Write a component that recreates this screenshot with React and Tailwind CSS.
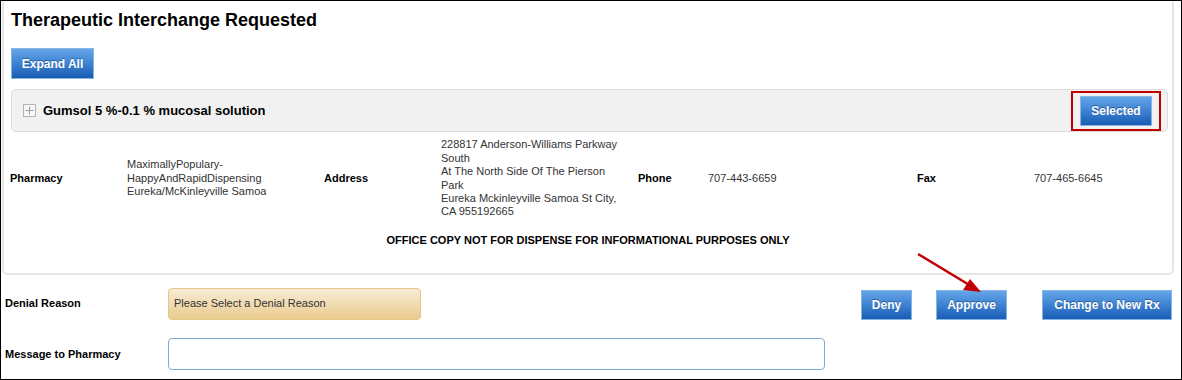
import React from "react";

const font = { fontFamily: '"Liberation Sans", Arial, sans-serif' };

const BlueButton = ({ children, className = "" }) => (
  <button
    type="button"
    className={`h-[30px] border border-[#86b5e6] bg-gradient-to-b from-[#65a5e8] via-[#3d82d2] to-[#185cb4] text-white font-bold text-[12px] [text-shadow:0_-1px_0_rgba(0,0,0,0.35)] ${className}`}
  >
    {children}
  </button>
);

const Lines = ({ lines }) => (
  <div className="text-[11px] leading-[13.4px] text-[#333]">
    {lines.map((l) => (
      <div key={l}>{l}</div>
    ))}
  </div>
);

const App = () => {
  return (
    <div
      style={font}
      className="relative w-[1182px] h-[380px] border border-black bg-white overflow-hidden text-black"
    >
      {/* main panel */}
      <div className="ml-[1px] w-[1172px] h-[274px] border-x-2 border-b-2 border-[#e6e6e6] rounded-b-[6px] pt-[8px]">
        <h1 className="pl-[7px] text-[18px] font-bold leading-[22px]">
          Therapeutic Interchange Requested
        </h1>

        <div className="pl-[7px] mt-[17px]">
          <BlueButton className="w-[83px] h-[31px]">Expand All</BlueButton>
        </div>

        <div className="ml-[7px] mt-[10px] w-[1157px] h-[43px] bg-[#f1f1f1] border border-[#dcdcdc] rounded-[5px] flex items-center pl-[11px] pr-[6px]">
          <span className="w-[13px] h-[13px] border border-[#b4b4b4] bg-[#f8f8f8] flex items-center justify-center">
            <svg width="11" height="11" viewBox="0 0 11 11">
              <path d="M5.5 1.5v8M1.5 5.5h8" stroke="#9a9a9a" strokeWidth="1" />
            </svg>
          </span>
          <span className="ml-[7px] text-[13px] font-bold">
            Gumsol 5 %-0.1 % mucosal solution
          </span>
          <div className="ml-auto border-2 border-[#c00000] px-[7px] py-[3px]">
            <BlueButton className="w-[72px]">Selected</BlueButton>
          </div>
        </div>

        <div className="mt-[6px] flex items-center pl-[6px] h-[81px] text-[11px]">
          <div className="w-[117px] font-bold">Pharmacy</div>
          <div className="w-[197px]">
            <Lines
              lines={[
                "MaximallyPopulary-",
                "HappyAndRapidDispensing",
                "Eureka/McKinleyville Samoa",
              ]}
            />
          </div>
          <div className="w-[117px] font-bold">Address</div>
          <div className="w-[197px]">
            <Lines
              lines={[
                "228817 Anderson-Williams Parkway",
                "South",
                "At The North Side Of The Pierson",
                "Park",
                "Eureka Mckinleyville Samoa St City,",
                "CA 955192665",
              ]}
            />
          </div>
          <div className="w-[70px] font-bold">Phone</div>
          <div className="w-[209px] text-[#333]">707-443-6659</div>
          <div className="w-[117px] font-bold">Fax</div>
          <div className="text-[#333]">707-465-6645</div>
        </div>

        <p className="mt-[15px] text-center text-[11px] font-bold leading-[13px]">
          OFFICE COPY NOT FOR DISPENSE FOR INFORMATIONAL PURPOSES ONLY
        </p>
      </div>

      {/* action rows */}
      <div className="mt-[13px] flex items-center h-[31px] pl-[4px]">
        <div className="w-[163px] text-[11px] font-bold">Denial Reason</div>
        <div className="w-[253px] h-[32px] rounded-[4px] border border-[#e3c68c] bg-gradient-to-b from-[#f7ecd6] to-[#eacb8c] flex items-center pl-[5px] text-[11px] text-[#333]">
          Please Select a Denial Reason
        </div>
        <BlueButton className="ml-[440px] w-[51px] mt-[2px]">Deny</BlueButton>
        <BlueButton className="ml-[24px] w-[71px] mt-[2px]">Approve</BlueButton>
        <BlueButton className="ml-[35px] w-[130px] mt-[2px]">Change to New Rx</BlueButton>
      </div>

      <div className="mt-[19px] flex items-center h-[32px] pl-[4px]">
        <div className="w-[163px] text-[11px] font-bold">Message to Pharmacy</div>
        <div className="w-[657px] h-[32px] rounded-[4px] border border-[#7fa9da] bg-white" />
      </div>

      {/* annotation arrow */}
      <svg
        className="absolute left-0 top-0 pointer-events-none"
        width="1182"
        height="380"
      >
        <line x1="917" y1="253" x2="970" y2="285" stroke="#c00000" strokeWidth="2.5" />
        <polygon points="980,291 962,289 969,278" fill="#c00000" />
      </svg>
    </div>
  );
};

export default App;
